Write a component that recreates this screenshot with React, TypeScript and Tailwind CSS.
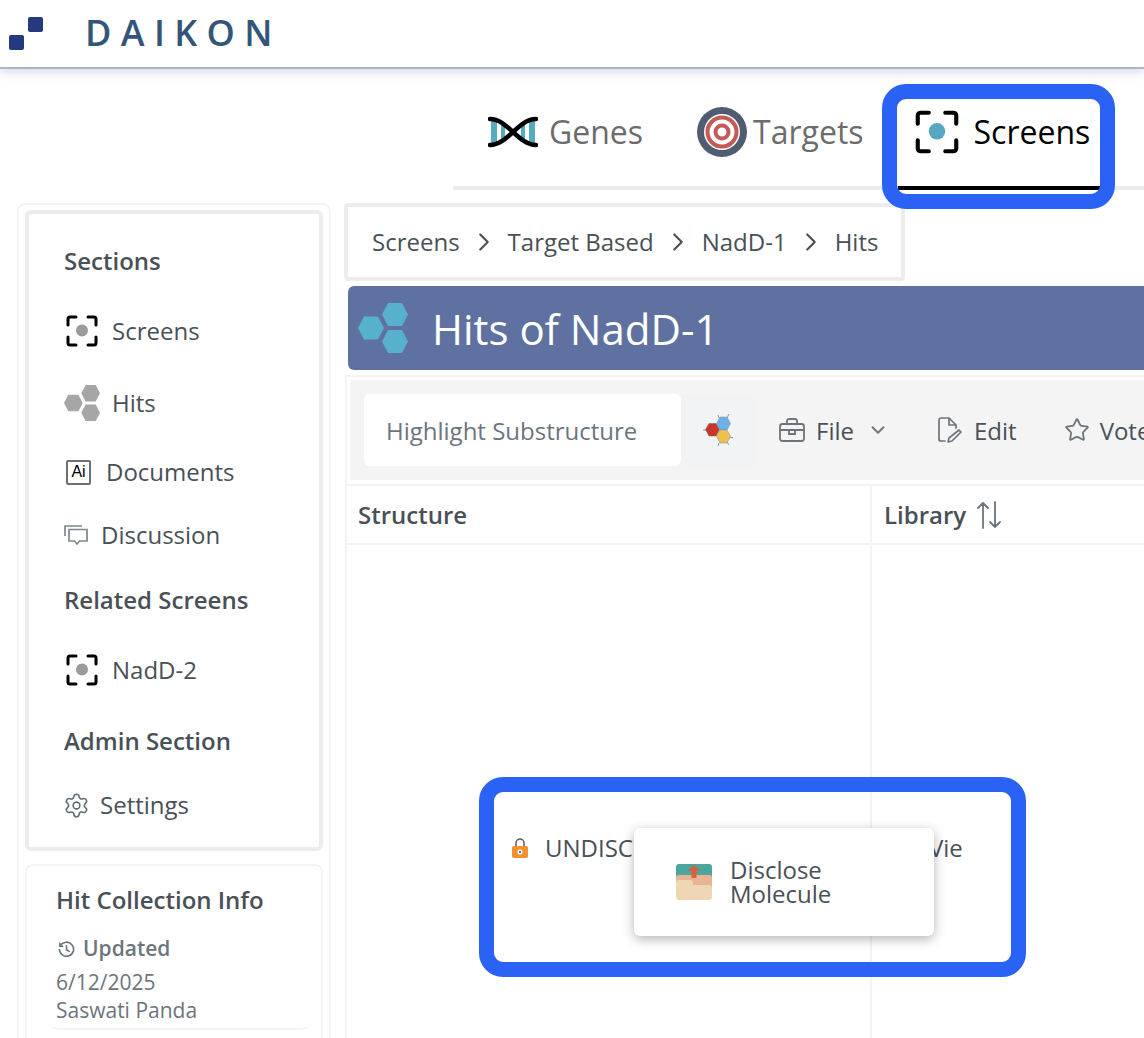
import React from "react";
import { ChevronDown, ChevronRight, Settings, Star } from "lucide-react";

const ScreenIcon = ({ dot, className }: { dot: string; className: string }) => (
  <svg viewBox="0 0 32 32" className={className} fill="none">
    <path d="M2 10V4a2 2 0 0 1 2-2h6M22 2h6a2 2 0 0 1 2 2v6M30 22v6a2 2 0 0 1-2 2h-6M10 30H4a2 2 0 0 1-2-2v-6" stroke="#000" strokeWidth="3" strokeLinecap="round" />
    <circle cx="16" cy="15.5" r="6" fill={dot} />
  </svg>
);

const Hexes = ({ color, className }: { color: string; className: string }) => (
  <svg viewBox="0 0 50 50" className={className}>
    <polygon points="30,0 44,0 50,11.500 44,23 30,23 24,11.500" fill={color} />
    <polygon points="30,27 44,27 50,38.500 44,50 30,50 24,38.500" fill={color} />
    <polygon points="6,13.500 20,13.500 26,25 20,36.500 6,36.500 0,25" fill={color} />
  </svg>
);

const NavRow = ({ icon, label, gap, mt }: { icon: React.ReactNode; label: string; gap: string; mt: string }) => (
  <div className={`flex h-12 items-center text-[24px] text-[#495057] ${gap} ${mt}`}>
    {icon}
    <span>{label}</span>
  </div>
);

const Heading = ({ label, mt }: { label: string; mt: string }) => (
  <div className={`flex h-12 items-center text-[24px] font-semibold text-[#495057] ${mt}`}>{label}</div>
);

const ChemIcon = () => (
  <svg viewBox="0 0 30 32" className="h-8 w-[30px]">
    <g stroke="#8a93a8" strokeWidth="1">
      <path d="M0 16h5M24 4l2-4M27 23l3 1M24 28l2 3M16 29l-1 3M16 4l-1-3" />
    </g>
    <polygon points="6,9.500 13,9.500 16.500,15.500 13,22 6,22 2.500,15.500" fill="#c9372c" stroke="#7b5a5a" strokeWidth=".5" />
    <polygon points="17,3 24,3 27.500,9.500 24,16 17,16 13.500,9.500" fill="#6db0e8" stroke="#7b8aa5" strokeWidth=".5" />
    <polygon points="17,16 24,16 27.500,22.500 24,29 17,29 13.500,22.500" fill="#f0c04f" stroke="#7b8aa5" strokeWidth=".5" />
  </svg>
);

export default function App() {
  return (
    <div className="relative h-[1038px] w-[1144px] overflow-hidden bg-white font-['Open_Sans',sans-serif]">
      {/* header */}
      <header className="flex h-[69px] items-center border-b-2 border-[#a9b6c9] pl-[9px] shadow-[0_3px_10px_rgba(130,150,180,0.35)]">
        <svg viewBox="0 0 34 33" className="h-[33px] w-[34px]">
          <rect x="19" y="0" width="15" height="15" rx="2" fill="#25397f" />
          <rect x="0" y="18" width="15" height="15" rx="2" fill="#25397f" />
        </svg>
        <span className="mb-[2px] ml-[42px] text-[36px] leading-none font-semibold tracking-[0.26em] text-[#335578]">DAIKON</span>
      </header>

      {/* tabs */}
      <nav className="ml-[453px] flex h-[121px] items-end border-b-4 border-[#ebebeb] pt-[9px]">
        <div className="mb-[-4px] flex h-[112px] items-center pb-[4px] pl-[35px] text-[32px] text-[#6c6c6c]">
          <svg viewBox="0 0 50 32" className="h-8 w-[50px]" fill="none">
            <g fill="#57abc0">
              <rect x="3" y="5" width="6" height="22" />
              <rect x="13" y="7" width="4" height="18" />
              <rect x="33" y="7" width="4" height="18" />
              <rect x="41" y="5" width="6" height="22" />
            </g>
            <path d="M2 3C20 3 30 29 48 29M2 29C20 29 30 3 48 3" stroke="#000" strokeWidth="4.500" strokeLinecap="round" />
          </svg>
          <span className="ml-[11px]">Genes</span>
        </div>
        <div className="mb-[-4px] ml-[54px] flex h-[112px] items-center pb-[4px] text-[32px] text-[#6c6c6c]">
          <svg viewBox="0 0 50 50" className="h-[50px] w-[50px]" fill="none">
            <circle cx="25" cy="25" r="25" fill="#505c70" />
            <circle cx="25" cy="25" r="18" fill="#fff" />
            <circle cx="25" cy="25" r="14.500" stroke="#c45a55" strokeWidth="4" />
            <circle cx="25" cy="25" r="6.500" stroke="#c45a55" strokeWidth="4" />
          </svg>
          <span className="ml-[6px]">Targets</span>
        </div>
        <div className="mb-[-4px] ml-[34px] flex h-[112px] w-[203px] items-center border-b-4 border-black pl-[17px] text-[32px] text-black">
          <ScreenIcon dot="#57a8bf" className="h-[44px] w-[44px]" />
          <span className="ml-[15px]">Screens</span>
        </div>
      </nav>

      <div className="mt-[13px] flex gap-[13px] pl-[17px]">
        {/* sidebar */}
        <aside className="h-[900px] w-[314px] shrink-0 rounded-lg border-2 border-[#f3f3f3] px-[6px] pt-[5px]">
          <div className="h-[641px] rounded-md border-4 border-[#ececec] pt-[23px] pl-[35px]">
            <Heading label="Sections" mt="" />
            <NavRow mt="mt-[22px]" gap="gap-[14px]" label="Screens" icon={<ScreenIcon dot="#9b9b9b" className="ml-[2px] h-8 w-8" />} />
            <NavRow mt="mt-[24px]" gap="gap-[12px]" label="Hits" icon={<Hexes color="#a6a6a6" className="h-[36px] w-[36px]" />} />
            <NavRow
              mt="mt-[21px]"
              gap="gap-[15px]"
              label="Documents"
              icon={
                <span className="ml-[2px] flex h-[25px] w-[25px] items-center justify-center rounded-[2px] border-2 border-[#6f6f6f] font-['Liberation_Sans',sans-serif] text-[16px] leading-none text-black">
                  Ai
                </span>
              }
            />
            <NavRow
              mt="mt-[15px]"
              gap="gap-[13px]"
              label="Discussion"
              icon={
                <svg viewBox="0 0 24 22" className="h-[22px] w-6" fill="none" stroke="#7c8791" strokeWidth="1.700">
                  <path d="M1 12V2h17" />
                  <path d="M5 5.500h18v11.500h-7.500l-2.500 3-2.500-3H5z" />
                </svg>
              }
            />
            <Heading label="Related Screens" mt="mt-[17px]" />
            <NavRow mt="mt-[22px]" gap="gap-[14px]" label="NadD-2" icon={<ScreenIcon dot="#9b9b9b" className="ml-[2px] h-8 w-8" />} />
            <Heading label="Admin Section" mt="mt-[23px]" />
            <NavRow mt="mt-[16px]" gap="gap-[10px]" label="Settings" icon={<Settings className="-ml-px h-[27px] w-[27px] text-[#5f6b76]" strokeWidth={1.400} />} />
          </div>
          <div className="mt-[13px] h-[220px] rounded-lg border-2 border-[#f3f3f3] pt-[17px]">
            <div className="pl-[29px] text-[24px] leading-[33px] font-semibold text-[#495057]">Hit Collection Info</div>
            <div className="mr-[11px] ml-[23px] h-[114px] rounded-lg border-b-2 border-[#f3f3f3] pt-[18px] pl-[6px] text-[21px] text-[#6c757d]">
              <div className="flex h-[30px] items-center gap-[8px] font-semibold">
                <svg viewBox="0 0 18 18" className="ml-[2px] h-[17px] w-[17px]" fill="none" stroke="#6c757d" strokeWidth="1.700" strokeLinecap="round">
                  <path d="M2.500 5A7.500 7.500 0 1 1 1.500 9" />
                  <path d="M2 2.500V5.500H5M9 5v4.500l3 1.500" />
                </svg>
                <span>Updated</span>
              </div>
              <div className="mt-[4px] leading-[28px]">6/12/2025</div>
              <div className="leading-[28px]">Saswati Panda</div>
            </div>
          </div>
        </aside>

        {/* main */}
        <main className="w-[850px] shrink-0">
          <div className="flex h-[78px] w-[561px] items-center rounded border-4 border-[#ececec] pl-[24px] text-[24px] text-[#495057]">
            <span>Screens</span>
            <ChevronRight className="mx-[9px] h-[30px] w-[30px]" strokeWidth={1.700} />
            <span>Target Based</span>
            <ChevronRight className="mx-[9px] h-[30px] w-[30px]" strokeWidth={1.700} />
            <span>NadD-1</span>
            <ChevronRight className="mx-[9px] h-[30px] w-[30px]" strokeWidth={1.700} />
            <span>Hits</span>
          </div>
          <div className="mt-[5px] ml-[4px] flex h-[84px] items-center rounded-l-md bg-[#5f71a0] pl-[10px]">
            <Hexes color="#57b1cc" className="h-[50px] w-[50px]" />
            <h1 className="mt-[1px] ml-[24px] text-[42px] font-normal text-white">Hits of NadD-1</h1>
          </div>
          <div className="mt-[5px] ml-[1px] border-t-2 border-l-2 border-[#f3f3f3]">
            <div className="mt-[3px] ml-[3px] flex h-[100px] items-center bg-[#f4f4f5] pl-[14px] text-[24px] text-[#495057]">
              <div className="flex h-[72px] w-[317px] items-center rounded-md bg-white pt-[2px] pl-[22px] text-[#6c757d]">Highlight Substructure</div>
              <div className="flex h-[72px] w-[74px] items-center justify-center bg-[#f2f3f5]">
                <ChemIcon />
              </div>
              <svg viewBox="0 0 26 24" className="ml-[24px] h-6 w-[26px]" fill="none" stroke="#6c757d" strokeWidth="1.800">
                <rect x="1" y="6" width="24" height="17" rx="2.500" />
                <path d="M8 6V3a2 2 0 0 1 2-2h6a2 2 0 0 1 2 2v3M1 12h24M10 12v4h6v-4" />
              </svg>
              <span className="ml-[11px] pt-[2px]">File</span>
              <ChevronDown className="ml-[13px] h-[22px] w-[22px] text-[#6c757d]" strokeWidth={2} />
              <svg viewBox="0 0 24 26" className="ml-[49px] h-[26px] w-6" fill="none" stroke="#6c757d" strokeWidth="1.700" strokeLinejoin="round" strokeLinecap="round">
                <path d="M7 24H3a2 2 0 0 1-2-2V3a2 2 0 0 1 2-2h8l7 7v3M11 1v7h7" />
                <path d="M21 13l2 2-9 9-4 1 1-4z" />
              </svg>
              <span className="ml-[12px] pt-[2px]">Edit</span>
              <Star className="ml-[47px] h-[26px] w-[26px] text-[#6c757d]" strokeWidth={1.700} />
              <span className="ml-[10px] pt-[2px]">Vote</span>
            </div>
            <div className="mt-[4px] grid grid-cols-[525px_1fr] border-t-2 border-[#f3f3f3]">
              <div className="flex h-[59px] items-center border-r-2 border-b-2 border-[#f3f3f3] pl-[11px] text-[24px] font-semibold text-[#495057]">Structure</div>
              <div className="flex h-[59px] items-center border-b-2 border-[#f3f3f3] pl-[12px] text-[24px] font-semibold text-[#495057]">
                <span>Library</span>
                <svg viewBox="0 0 24 28" className="ml-[11px] h-7 w-6" fill="none" stroke="#6c757d" strokeWidth="1.800" strokeLinecap="round" strokeLinejoin="round">
                  <path d="M6 27V2M1 7l5-5 5 5M18 1v25M13 21l5 5 5-5" />
                </svg>
              </div>
              <div className="h-[600px] border-r-2 border-[#f3f3f3] pt-[285px] pl-[165px] text-[24px] text-[#495057]">
                <div className="flex items-center">
                  <svg viewBox="0 0 16 20" className="h-5 w-4">
                    <path d="M4 9V5a4 4 0 0 1 8 0v4" fill="none" stroke="#5a5a5a" strokeWidth="1.500" />
                    <rect x="0" y="8" width="16" height="12" rx="2" fill="#f2912f" />
                    <circle cx="8" cy="14" r="2.500" fill="#fff" />
                    <circle cx="8" cy="14" r="1.200" fill="#4a7bb8" />
                  </svg>
                  <span className="ml-[17px]">UNDISCLOSED</span>
                </div>
              </div>
              <div className="pt-[285px] pl-[57px] text-[24px] text-[#495057]">Vie</div>
            </div>
          </div>
        </main>
      </div>

      {/* popup menu */}
      <div className="absolute top-[828px] left-[634px] flex h-[108px] w-[300px] items-center rounded-md bg-white pl-[42px] text-[24px] leading-[24px] text-[#495057] shadow-[0_3px_12px_rgba(0,0,0,0.3)]">
        <svg viewBox="0 0 36 36" className="h-9 w-9 shrink-0">
          <rect width="36" height="26" rx="3" fill="#4ba69e" />
          <path d="M0 14a3 3 0 0 1 3-3h30a3 3 0 0 1 3 3v10H0z" fill="#eab394" />
          <path d="M18 1l6.500 6h-4v7h-5V7h-4z" fill="#d9603f" />
          <path d="M0 19a3 3 0 0 1 3-3h11a3 3 0 0 1 3 3v2h16a3 3 0 0 1 3 3v9a3 3 0 0 1-3 3H3a3 3 0 0 1-3-3z" fill="#efd6b4" />
        </svg>
        <span className="ml-[18px]">
          Disclose
          <br />
          Molecule
        </span>
      </div>

      {/* highlights */}
      <div className="pointer-events-none absolute top-[84px] left-[882px] h-[125px] w-[233px] rounded-[24px] border-[15px] border-[#2b62f6]" />
      <div className="pointer-events-none absolute top-[777px] left-[479px] h-[200px] w-[547px] rounded-[24px] border-[15px] border-[#2b62f6]" />
    </div>
  );
}
